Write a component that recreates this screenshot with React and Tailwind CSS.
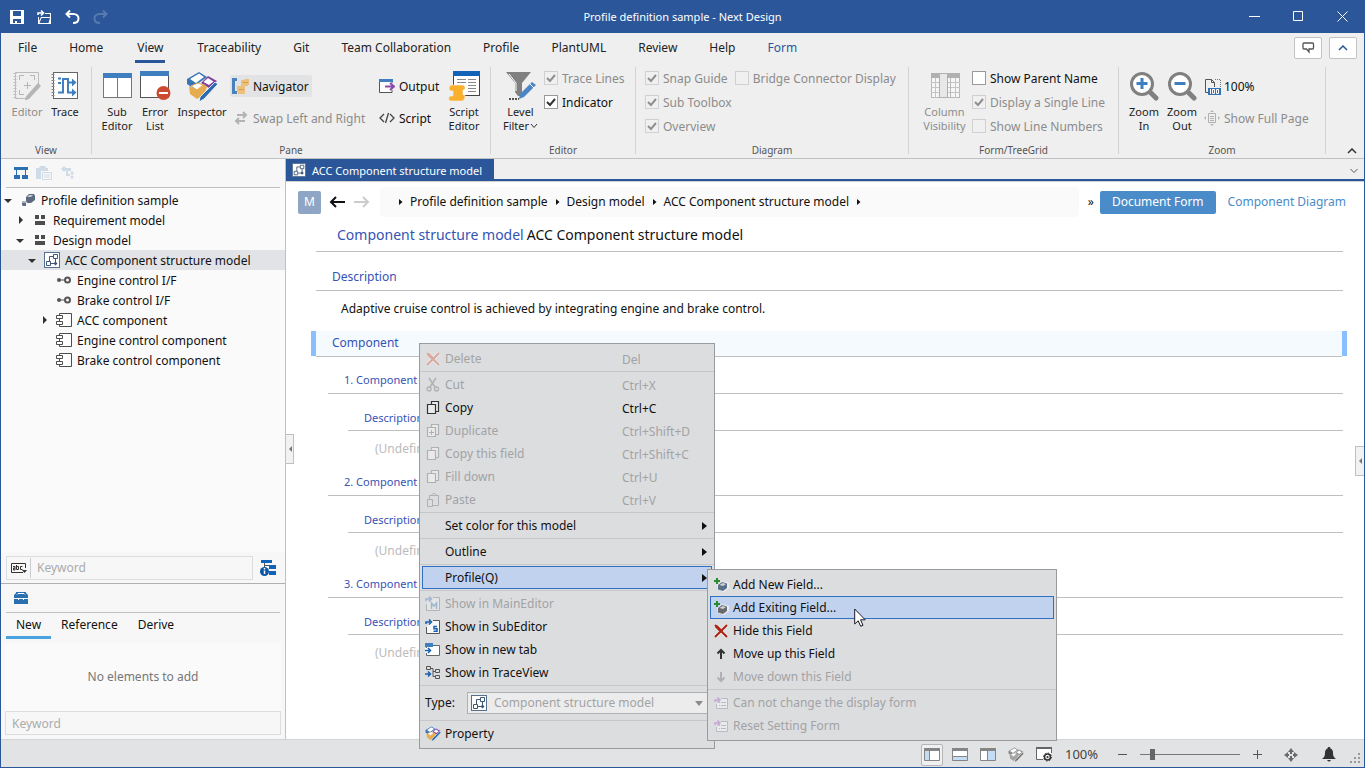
import React from 'react';
import clsx from 'clsx';

/* ---------- icons ---------- */

function Svg({ w = 16, h = 16, children, className }) {
    return (
        <svg width={w} height={h} viewBox={`0 0 ${w} ${h}`} fill="none" className={clsx("shrink-0", className)} aria-hidden="true">
            {children}
        </svg>
    );
}

const SaveIcon = () => (
    <Svg w={14} h={14}>
        <path fill="#fff" fillRule="evenodd" d="M0 0h14v14H0zM3 1v5h8V1zM3 9v4h2v-2h2v2h4V9z" />
    </Svg>
);

const OpenIcon = () => (
    <Svg w={15} h={14}>
        <path stroke="#fff" strokeWidth="1.600" d="M1 5V3h5M4 .500 6.500 3 4 5.500" />
        <path fill="#fff" fillRule="evenodd" d="M8 3h6v11H1V7h1v4l2-4h9V4H8z" />
        <path fill="#2b579a" d="M4.500 8H13l-1.500 5H2.500z" />
    </Svg>
);

const UndoIcon = ({ flip }) => (
    <Svg w={15} h={14} className={flip ? "-scale-x-100 opacity-20" : ""}>
        <path stroke="#fff" strokeWidth="2" d="M5 .500 1.500 4 5 7.500M2 4h6.500C11.500 4 13.500 6 13.500 8.500S11.500 13 8 13" />
    </Svg>
);

const EditorIcon = () => (
    <Svg w={30} h={30}>
        <path stroke="#bcbcbc" d="M3.500 1.500h23v14M3.500 1.500v26h12" />
        <path stroke="#bcbcbc" strokeDasharray="1 2" strokeWidth="3" d="M3 2v26" />
        <path stroke="#b5b5b5" d="M7.500 9V4.500H12M18 4.500h4.500V9M7.500 19v4.500H12M15.500 11v7M12 14.500h7" />
        <path fill="#b5b5b5" d="m26 12 3 3-12 13-4 1.500 1-4z" />
    </Svg>
);

const TraceIcon = () => (
    <Svg w={28} h={30}>
        <rect x="2.500" y="1.500" width="24" height="26" fill="#fff" stroke="#666" />
        <path stroke="#888" strokeDasharray="1 2" strokeWidth="3" d="M2 3v24" />
        <path stroke="#3f7fbf" strokeWidth="2" d="M7 7.500h3M7 12h3M7 21.500h5V8h5v13.500h4M17 11.500h5" />
        <path fill="#3f7fbf" d="m21 7.500 4.500 4-4.500 4zM21 17.500l4.500 4-4.500 4z" />
    </Svg>
);

const SubEditorIcon = () => (
    <Svg w={30} h={30}>
        <rect x="1.500" y="3.500" width="28" height="23" fill="#fff" stroke="#777" />
        <path fill="#3f7fbf" d="M1 2h29v5H1z" />
        <path stroke="#777" d="M15.500 7v20" />
    </Svg>
);

const ErrorListIcon = () => (
    <Svg w={32} h={30}>
        <rect x="1.500" y="1.500" width="28" height="25" fill="#fff" stroke="#555" />
        <path fill="#3f7fbf" d="M1 0h29v5H1z" />
        <circle cx="24.500" cy="22" r="7" fill="#cc4a31" />
        <path fill="#fff" d="M20 21h9v2h-9z" />
    </Svg>
);

function InspectorIcon({ size = 32, gray }) {
    const c = gray ? ["#8a8a8a", "#8a8a8a", "#a5a5a5", "#777"] : ["#3a75b5", "#7d3fa0", "#e8ac50", "#2b6cb0"];
    return (
        <svg width={size} height={size} viewBox="0 0 32 32" fill="none" className="shrink-0" aria-hidden="true">
            <path d="M1 8 13 1l8 5-11 8zM1 8l9 6v5l-9-6z" fill={c[0]} />
            <path d="m4 8 9-5.500L18 6l-8 6z" fill="#fff" />
            <path d="m22 5 9 5-8 7-8-5z" fill={c[1]} />
            <path d="m22 7 5.500 3.500L23 14l-5.500-3z" fill="#fff" />
            <path d="m3 15 8 4v9l-7-5zM11 19l7-6 3 3-3 8-7 4z" fill={c[2]} />
            <path d="m5 15 7-3 5 2-6 5z" fill="#fff" stroke={c[2]} />
            <path d="m29 11 3 2-14 15-5 3 1-5z" fill={c[3]} stroke="#fff" strokeWidth=".8" />
        </svg>
    );
}

const NavigatorIcon = () => (
    <Svg w={18} h={16}>
        <path fill="#4a82bd" d="M0 0h5v3H3v10h2v3H0z" />
        <path fill="#ecc07a" d="M9 2h3l1-1h4v6h-1v1h-3v8H6v-2H5V8h4z" />
        <path stroke="#d99d4a" d="M7 11.500h5M11 4.500h5" />
    </Svg>
);

const SwapIcon = () => (
    <Svg w={14} h={14}>
        <path stroke="#b3b3b3" strokeWidth="2" d="M3 4h9M9 1l3 3-3 3M11 10H2M5 7l-3 3 3 3" />
    </Svg>
);

const OutputIcon = () => (
    <Svg w={16} h={14}>
        <path fill="#fff" stroke="#555" d="M13 4V1.500H.500v12H13V11" />
        <path fill="#3f7fbf" d="M0 0h14v3H0z" />
        <path stroke="#8a4aab" strokeWidth="2" d="M6 7.500h8M11 4l4 3.500-4 3.500" />
    </Svg>
);

const ScriptIcon = () => (
    <Svg w={16} h={12}>
        <path stroke="#444" strokeWidth="1.300" d="M5 2 1 6l4 4M11 2l4 4-4 4M9.500 1l-3 10" />
    </Svg>
);

const ScriptEditorIcon = () => (
    <Svg w={32} h={30}>
        <rect x="5.500" y="1.500" width="26" height="23" fill="#fff" stroke="#444" />
        <path fill="#1262b8" d="M5 0h27v5H5z" />
        <path stroke="#888" d="M9 8.500h9M20 8.500h8M9 11.500h9M20 11.500h8M20 14.500h8M20 17.500h8M20 20.500h8" />
        <path fill="#fbb02d" stroke="#f0efef" strokeWidth=".6" d="M4 14h10c4 0 4 5 1 5v5h2c0 4-1 6-4 6H3c-3 0-3-5 0-5h2v-5H3c-3-1-2-6 1-6z" />
    </Svg>
);

const FilterIcon = () => (
    <Svg w={32} h={30}>
        <path fill="#808080" d="M1 1h25l-9 11v13h-4l-3-4v-9z" />
        <path stroke="#fff" d="m4 3 7 9v8" />
        <path stroke="#555" strokeWidth="2" strokeDasharray="2 1" d="M4 28h10" />
        <path fill="#4a86c5" d="m27 11 4 3-12 12-5 2 1-5z" />
        <path stroke="#fff" d="m25 13 4 4" />
    </Svg>
);

const ColumnsIcon = () => (
    <Svg w={32} h={28}>
        <rect x="2.500" y="2.500" width="28" height="24" fill="#f6f6f6" stroke="#b8b8b8" />
        <path fill="#b0b0b0" d="M2 2h29v5H2z" />
        <path stroke="#c4c4c4" d="M2 11.500h29M2 16.500h29M2 21.500h29M6.500 7v20M26.500 7v20" />
        <path fill="#e8e8e8" stroke="#b0b0b0" d="M10.500 2.500h8v24h-8z" />
        <path stroke="#b8b8b8" d="M21.500 7v20" />
    </Svg>
);

const ZoomIcon = ({ plus }) => (
    <Svg w={30} h={30}>
        <circle cx="13" cy="13" r="10.500" fill="#fff" stroke="#808080" strokeWidth="3" />
        <path stroke="#808080" strokeWidth="5" strokeLinecap="round" d="m22 22 5 5" />
        <path stroke="#3f7fbf" strokeWidth="3" d={plus ? "M7.500 12.500h11M13 7v11" : "M7.500 12.500h11"} />
    </Svg>
);

const Page100Icon = () => (
    <Svg w={17} h={17}>
        <path stroke="#555" d="M4 14.500H1.500V1.500h6l3 3V9M7.500 1.500v3h3" />
        <path stroke="#777" strokeDasharray="1 1" d="M11 1.500h5.500V9" />
        <path fill="#3273b8" d="M4 10h13v7H4z" />
        <path stroke="#fff" d="M6.500 11v5M8.500 11.500h2v4h-2zM12.500 11.500h2v4h-2z" />
    </Svg>
);

const FullPageIcon = () => (
    <Svg w={16} h={16}>
        <path stroke="#b0b0b0" d="M4.500 3.500h7v9h-7zM6 6.500h4M6 8.500h4M6 10.500h4" />
        <path fill="#b8b8b8" d="m8 0 2 2H6zM8 16l2-2H6zM0 8l2-2v4zM16 8l-2-2v4z" />
    </Svg>
);

const StructIcon = ({ size = 16 }) => (
    <svg width={size} height={size} viewBox="0 0 16 16" fill="none" className="shrink-0" aria-hidden="true">
        <rect x=".5" y=".5" width="15" height="15" fill="#fff" stroke="#56708f" />
        <path stroke="#3f5876" d="M9.500 2.500h4v4h-4zM2.500 9.500h4v4h-4zM9 4.500H5.500V9M7 11.500h3M11.500 7v3" />
        <path fill="#3f5876" d="m11.500 9.500 2 2-2 2-2-2z" />
    </svg>
);

const ProjectIcon = () => (
    <Svg>
        <path fill="#5c6b80" d="m6 5 3-3h5l1 2v4l-4 3H7L6 9z" />
        <path fill="#5c6b80" d="M2 9h4v5H3l-1-1z" />
        <path fill="#c5cdd8" d="m7 5 2.500-2H13l-2 2z" />
        <path fill="#fff" d="M2 9.500h4v1H2z" />
    </Svg>
);

const PackageIcon = () => (
    <Svg>
        <path fill="#4d4d4d" d="M3 3h4v4H3zM9 3h4v4H9zM3 9h10v4H3z" />
    </Svg>
);

const InterfaceIcon = () => (
    <Svg>
        <circle cx="3" cy="8" r="2" fill="#555" />
        <path stroke="#555" d="M4 8h6" />
        <circle cx="11.500" cy="8" r="2.500" stroke="#555" strokeWidth="2" />
    </Svg>
);

const ComponentIcon = () => (
    <Svg>
        <path stroke="#4d4d4d" d="M3.500 1.500h12v13h-12z" fill="#fff" />
        <path stroke="#4d4d4d" d="M.500 3.500h6v3h-6zM.500 9.500h6v3h-6z" fill="#fff" />
    </Svg>
);

const CopyIcon = ({ plus, color = "#9d9ea0" }) => (
    <Svg w={14} h={16}>
        <path stroke={color} strokeWidth="1.200" fill="#f4f4f4" fillOpacity=".6" d="M5.500 4V1.500h7v10H10M1.500 4.500h8v9h-8z" />
        {plus && <path stroke={color} d="M3 9.500h5M5.500 7v5" />}
    </Svg>
);

const PasteIcon = () => (
    <Svg w={14} h={16}>
        <path stroke="#b0b1b3" d="M3.500 7V3.500h9v10H7M6 3.500v-1l1-1h2l1 1v1M1.500 7.500h5v7h-5z" />
    </Svg>
);

const CutIcon = () => (
    <Svg w={14} h={16}>
        <path stroke="#b0b1b3" strokeWidth="1.500" d="m3 1 6 9M10 1l-6 9" />
        <circle cx="3" cy="12" r="2" stroke="#b0b1b3" strokeWidth="1.300" />
        <circle cx="10.500" cy="12" r="2" stroke="#b0b1b3" strokeWidth="1.300" />
    </Svg>
);

const CrossIcon = ({ color }) => (
    <Svg w={14} h={14}>
        <path stroke="#f2f2f2" strokeWidth="4" d="m1 1 12 12M13 1 1 13" opacity=".6" />
        <path stroke={color} strokeWidth="2" d="m1 1 12 12M13 1 1 13" />
        <path stroke={color} strokeWidth="3" d="m2 2 6 6" />
    </Svg>
);

const ShowInIcon = ({ letter, faded }) => (
    <Svg className={faded ? "opacity-30" : ""}>
        <path fill="#f8f8f8" stroke="#555" d="M8 1.500h6.500v13H1.500V8" />
        <path stroke="#1560b0" strokeWidth="1.500" d="M1 5V3h4M4 .500 6.500 3 4 5.500" />
        <path
            stroke="#1560b0"
            strokeWidth="1.500"
            d={letter === "M" ? "M6.500 13V7l2.500 3 2.500-3v6" : "M12 7.500H9v2.200h3v2.500H8.500"}
        />
    </Svg>
);

const NewTabIcon = () => (
    <Svg>
        <path fill="#fff" stroke="#666" d="M1.500 3.500h13v10h-13z" />
        <path fill="#3f7fbf" d="M0 1h8v4H0z" />
        <path fill="#fff" d="M0 6h7v5H0z" />
        <path stroke="#1560b0" strokeWidth="1.500" d="M0 8.500h5M3 6l2.500 2.500L3 11" />
    </Svg>
);

const TraceViewIcon = () => (
    <Svg>
        <path stroke="#555" d="M1.500 1.500h4v3h-4zM10.500 4.500h4v3h-4zM10.500 10.500h4v3h-4zM6 3.500h2v8h2M8 6.500h2" />
        <path stroke="#1560b0" strokeWidth="1.500" d="M0 9h5M3 6.500 5.500 9 3 11.500" />
    </Svg>
);

const AddFieldIcon = ({ color }) => (
    <Svg>
        <path fill="#f4f4f4" d="m4 8 5-4 7 2v5l-5 4-6-2z" opacity=".8" />
        <path fill={color} d="m5 8 4-3 5 1.500V11l-4 3-5-1.500z" />
        <path fill="#cdd3da" d="m6.500 8 3-2 3.500 1-3 2z" />
        <path stroke="#2c8a2c" strokeWidth="2" d="M1 4h6M4 1v6" />
    </Svg>
);

const ArrowIcon = ({ down, color }) => (
    <Svg className={down ? "rotate-180" : ""}>
        <path stroke={color} strokeWidth="2" d="M8 13V4M4.500 7.500 8 4l3.500 3.500" />
    </Svg>
);

const FormResetIcon = () => (
    <Svg w={15} h={14}>
        <path fill="#e9eaec" stroke="#b9bac6" d="M7 2.500h6.500v10h-11V8" />
        <path stroke="#b9bac6" d="M5 6.500h1M7 6.500h5M5 9.500h1M7 9.500h5" />
        <path stroke="#c3a9d3" strokeWidth="1.500" d="M1 6V4h4M3.500 1.500 6 4 3.500 6.500" />
    </Svg>
);

const TreeViewIcon = () => (
    <Svg w={14} h={14}>
        <path fill="#2a6fb0" d="M0 1h14v3H0zM0 9h6v4H0zM8 9h6v4H8z" />
        <path stroke="#2a6fb0" d="M2.500 4v5M11.500 4v5" />
    </Svg>
);

const PaneFrame = ({ children }) => (
    <Svg w={16} h={14}>
        <path fill="#fff" d="M1 1h14v12H1z" />
        {children}
        <path stroke="#858585" d="M.500.500h15v12H.500z" />
        <path fill="#858585" d="M0 0h16v3H0z" />
    </Svg>
);

const Cursor = () => (
    <Svg w={13} h={20} className="absolute top-[608px] left-[853px] z-30">
        <path fill="#fff" stroke="#1a1a2a" d="M.700 1v15l3.500-3.200 2.500 5.500 2.300-1-2.500-5.500h4.700z" />
    </Svg>
);

/* ---------- ribbon ---------- */

const tabs = ["File", "Home", "View", "Traceability", "Git", "Team Collaboration", "Profile", "PlantUML", "Review", "Help", "Form"];

function BigButton({ icon, lines, className, disabled, drop }) {
    return (
        <button
            disabled={disabled}
            className={clsx("flex flex-col items-center pt-2 text-[11px] leading-[14px]", disabled ? "text-[#8c8c8c]" : "text-[#222]", className)}
        >
            <span className="mb-1 flex h-[30px] items-start justify-center">{icon}</span>
            {lines.map((line, i) => (
                <span key={line} className="flex items-center whitespace-nowrap">
                    {line}
                    {drop && i === lines.length - 1 && (
                        <Svg w={8} h={6} className="ml-px">
                            <path stroke="#333" d="m1 1 3 3.500L7 1" />
                        </Svg>
                    )}
                </span>
            ))}
        </button>
    );
}

function SmallButton({ icon, label, disabled, active }) {
    return (
        <button
            disabled={disabled}
            className={clsx(
                "flex h-[22px] items-center gap-1 self-start rounded-xs px-[3px] whitespace-nowrap",
                active && "bg-[#e1e3e5]",
                disabled ? "text-[#8c8c8c]" : "text-[#111]"
            )}
        >
            <span className="flex w-4 justify-center">{icon}</span>
            <span className="pt-0.5">{label}</span>
        </button>
    );
}

function Check({ label, checked, disabled }) {
    return (
        <label className={clsx("flex h-6 items-center gap-1 whitespace-nowrap", disabled ? "text-[#8c8c8c]" : "text-[#111]")}>
            <span className="grid">
                <input
                    type="checkbox"
                    defaultChecked={checked}
                    disabled={disabled}
                    className={clsx(
                        "col-start-1 row-start-1 size-3.5 appearance-none border",
                        disabled ? "border-[#cfd0d2] bg-[#f0f0f0]" : "border-[#9a9a9a] bg-white"
                    )}
                />
                {checked && (
                    <Svg w={14} h={14} className="pointer-events-none col-start-1 row-start-1">
                        <path stroke={disabled ? "#8f8f8f" : "#333"} strokeWidth="2" d="m3 7 3 3 5-6" />
                    </Svg>
                )}
            </span>
            <span className="pt-0.5">{label}</span>
        </label>
    );
}

function Group({ title, width, children }) {
    return (
        <section aria-label={title} className={clsx("flex shrink-0 flex-col", width)}>
            <div className="flex h-20 items-start">{children}</div>
            <div className="text-center text-[10px] leading-[14px] text-[#555]">{title}</div>
        </section>
    );
}

const Divider = () => <div className="mt-1 h-[87px] w-px shrink-0 bg-[#d2d3d5]" />;

function Ribbon() {
    return (
        <div className="shrink-0 border-b border-[#bfc0c2] bg-[#efefef]">
            <nav className="flex h-[30px] pl-px">
                {tabs.map((tab) => (
                    <button
                        key={tab}
                        className={clsx("flex flex-col items-center px-4 pt-1.5 leading-[18px] whitespace-nowrap", tab === "Form" ? "text-[#2b579a]" : "text-[#222]")}
                    >
                        <span>{tab}</span>
                        {tab === "View" && <span className="mt-[3px] h-[3px] w-[30px] bg-[#2b579a]" />}
                    </button>
                ))}
                <div className="ml-auto flex items-start gap-[7px] pt-1 pr-[7px]">
                    <button aria-label="Feedback" className="flex h-[22px] w-7 items-center justify-center rounded-xs border border-[#c3c3c3] bg-white">
                        <Svg w={14} h={14}>
                            <path stroke="#555" strokeWidth="1.300" d="M3 2h8.500q1 0 1 1v4q0 1-1 1H8v3L5.500 8H3Q2 8 2 7V3q0-1 1-1z" />
                        </Svg>
                    </button>
                    <button aria-label="Collapse" className="flex h-[22px] w-7 items-center justify-center rounded-xs border border-[#c3c3c3] bg-white">
                        <Svg w={10} h={6}>
                            <path stroke="#2b579a" strokeWidth="1.500" d="m1 5 4-4 4 4" />
                        </Svg>
                    </button>
                </div>
            </nav>
            <div className="flex h-[95px]">
                <Group title="View" width="w-[90px]">
                    <BigButton icon={<EditorIcon />} lines={["Editor"]} disabled className="ml-[7px] w-[38px]" />
                    <BigButton icon={<TraceIcon />} lines={["Trace"]} className="w-[38px]" />
                </Group>
                <Divider />
                <Group title="Pane" width="w-[398px]">
                    <BigButton icon={<SubEditorIcon />} lines={["Sub", "Editor"]} className="ml-1.5 w-[38px]" />
                    <BigButton icon={<ErrorListIcon />} lines={["Error", "List"]} className="w-[38px]" />
                    <BigButton icon={<InspectorIcon />} lines={["Inspector"]} className="w-14" />
                    <div className="flex w-[146px] flex-col gap-2.5 pt-3">
                        <SmallButton icon={<NavigatorIcon />} label="Navigator" active />
                        <SmallButton icon={<SwapIcon />} label="Swap Left and Right" disabled />
                    </div>
                    <div className="flex w-[69px] flex-col gap-2.5 pt-3">
                        <SmallButton icon={<OutputIcon />} label="Output" />
                        <SmallButton icon={<ScriptIcon />} label="Script" />
                    </div>
                    <BigButton icon={<ScriptEditorIcon />} lines={["Script", "Editor"]} className="w-[38px]" />
                </Group>
                <Divider />
                <Group title="Editor" width="w-36">
                    <BigButton icon={<FilterIcon />} lines={["Level", "Filter"]} drop className="ml-1.5 w-[47px]" />
                    <div className="pt-[3px]">
                        <Check label="Trace Lines" checked disabled />
                        <Check label="Indicator" checked />
                    </div>
                </Group>
                <Divider />
                <Group title="Diagram" width="w-[272px]">
                    <div className="pt-[3px] pl-[9px]">
                        <div className="flex gap-[7px]">
                            <Check label="Snap Guide" checked disabled />
                            <Check label="Bridge Connector Display" disabled />
                        </div>
                        <Check label="Sub Toolbox" checked disabled />
                        <Check label="Overview" checked disabled />
                    </div>
                </Group>
                <Divider />
                <Group title="Form/TreeGrid" width="w-[209px]">
                    <BigButton icon={<ColumnsIcon />} lines={["Column", "Visibility"]} disabled className="ml-2 w-[55px]" />
                    <div className="pt-[3px]">
                        <Check label="Show Parent Name" />
                        <Check label="Display a Single Line" checked disabled />
                        <Check label="Show Line Numbers" disabled />
                    </div>
                </Group>
                <Divider />
                <Group title="Zoom" width="w-[206px]">
                    <BigButton icon={<ZoomIcon plus />} lines={["Zoom", "In"]} className="ml-1.5 w-[38px]" />
                    <BigButton icon={<ZoomIcon />} lines={["Zoom", "Out"]} className="w-[38px]" />
                    <div className="flex flex-col gap-2.5 pt-3">
                        <SmallButton icon={<Page100Icon />} label="100%" />
                        <SmallButton icon={<FullPageIcon />} label="Show Full Page" disabled />
                    </div>
                </Group>
                <Divider />
                <button aria-label="Hide ribbon" className="mr-[7px] mb-1 ml-auto self-end">
                    <Svg w={10} h={6}>
                        <path stroke="#333" strokeWidth="1.500" d="m1 5 4-4 4 4" />
                    </Svg>
                </button>
            </div>
        </div>
    );
}

/* ---------- sidebar ---------- */

const tree = [
    { label: "Profile definition sample", icon: <ProjectIcon />, indent: "pl-[2px]", open: true },
    { label: "Requirement model", icon: <PackageIcon />, indent: "pl-3.5", closed: true },
    { label: "Design model", icon: <PackageIcon />, indent: "pl-3.5", open: true },
    { label: "ACC Component structure model", icon: <StructIcon />, indent: "pl-[26px]", open: true, selected: true },
    { label: "Engine control I/F", icon: <InterfaceIcon />, indent: "pl-[38px]" },
    { label: "Brake control I/F", icon: <InterfaceIcon />, indent: "pl-[38px]" },
    { label: "ACC component", icon: <ComponentIcon />, indent: "pl-[38px]", closed: true },
    { label: "Engine control component", icon: <ComponentIcon />, indent: "pl-[38px]" },
    { label: "Brake control component", icon: <ComponentIcon />, indent: "pl-[38px]" },
];

function TreeRow({ node }) {
    return (
        <li className={clsx("flex h-5 items-center whitespace-nowrap", node.indent, node.selected && "bg-[#e1e3e7]")}>
            <Svg w={10} h={10} className="mr-[7px]">
                {node.open && <path fill="#333" d="M1 4h8L5 8z" />}
                {node.closed && <path fill="#333" d="m4 1 4 4-4 4z" />}
            </Svg>
            <span className="mr-[5px]">{node.icon}</span>
            <span className="pt-0.5">{node.label}</span>
        </li>
    );
}

function Sidebar() {
    return (
        <aside className="flex w-[285px] shrink-0 flex-col border-r border-[#bfc0c2] bg-[#f7f7f7]">
            <div className="mx-[5px] flex h-[29px] shrink-0 items-center gap-2 border-b border-[#c0c0c0] pl-2">
                <TreeViewIcon />
                <Svg>
                    <path fill="#cfdce8" d="M0 3h3l1-2h5l1 2h2v3H5v8H0z" />
                    <path stroke="#cfdce8" fill="#f7f7f7" d="M6.500 7.500h9v7h-9zM8 10h6M8 12h6" />
                </Svg>
                <Svg>
                    <path fill="#cfdce8" d="m4 1 3 3-3 3-3-3zM6 3h5v3H6z" />
                    <path fill="#cfdce8" d="M6 6h2v3h2v2H6zM12 6l2 2-2 2-2-2zM12 10l2 2-2 2-2-2z" />
                </Svg>
            </div>
            <ul className="min-h-0 flex-1 bg-[#fafafa] pt-0.5">
                {tree.map((node) => <TreeRow key={node.label} node={node} />)}
            </ul>
            <div className="flex h-8 shrink-0 items-center border-b border-[#b0b0b0] pl-[5px]">
                <div className="flex h-6 flex-1 items-center border border-[#dcdddf]">
                    <Svg w={17} h={12} className="ml-1">
                        <path stroke="#333" d="M14.500 6V1.500H.500v9H12" />
                        <path stroke="#333" d="M2 4.500h2v3.500H2.500V6H4M5.500 3v4.500h2v-3h-2M11.500 4.500h-2v3h2" />
                        <path fill="#333" d="M11 8h5l-2.500 3z" />
                    </Svg>
                    <input aria-label="Model keyword" placeholder="Keyword" className="ml-[2px] h-5 w-full min-w-0 border-l border-[#c8cdd2] px-1.5 placeholder:text-[#aaabad]" />
                </div>
                <Svg className="mr-[9px] ml-[7px]">
                    <path fill="#1262b8" d="M1 0h11v3H1zM9 5h7v4H9zM9 11h7v4H9z" />
                    <circle cx="4.500" cy="11.500" r="4.500" fill="#0d56a6" />
                    <path stroke="#fff" strokeWidth="1.500" d="M4.500 8v1.500M4.500 10.500V14" />
                    <path stroke="#555" d="M4.500 3v4M4 5.500h5" />
                </Svg>
            </div>
            <div className="mx-[5px] flex h-[29px] shrink-0 items-center border-b border-[#c0c0c0] pl-2">
                <Svg w={14} h={14}>
                    <path fill="#2a6fb0" d="M2 2V1h10v1l2 2v3H0V4zM0 8h14v5H0z" />
                    <path stroke="#fff" d="M3 3.500 4 2.500h6l1 1M4.500 7v2M9.500 7v2" />
                </Svg>
            </div>
            <div className="mx-[5px] flex h-[26px] shrink-0">
                <button className="border-b-[3px] border-[#4aa3df] px-2.5">New</button>
                <button className="border-b-[3px] border-transparent px-2.5">Reference</button>
                <button className="border-b-[3px] border-transparent px-2.5">Derive</button>
            </div>
            <div className="mx-1 mt-1 flex h-[68px] shrink-0 items-center justify-center bg-[#fafafa] text-[#777]">No elements to add</div>
            <input aria-label="Element keyword" placeholder="Keyword" className="mx-1 mb-1 h-6 shrink-0 border border-[#dcdddf] px-1.5 placeholder:text-[#aaabad]" />
        </aside>
    );
}

/* ---------- document ---------- */

const crumbs = ["Profile definition sample", "Design model", "ACC Component structure model"];

const CrumbArrow = () => (
    <Svg w={5} h={6}>
        <path fill="#111" d="M1 0 4.500 3 1 6z" />
    </Svg>
);

function ComponentEntry({ n }) {
    return (
        <div className="h-[102px]">
            <h3 className="ml-3 h-[26px] border-b border-[#bfbfbf] pl-4 text-[11px] leading-6 text-[#3553b5]">{n}. Component</h3>
            <h4 className="mt-3 ml-8 h-[25px] border-b border-[#bfbfbf] pl-4 text-[11px] leading-6 text-[#3553b5]">Description</h4>
            <p className="mt-2 ml-[59px] leading-5 text-[#bbb]">(Undefined)</p>
        </div>
    );
}

function Document() {
    return (
        <main className="relative flex min-w-0 flex-1 flex-col bg-white">
            <div className="flex h-[22px] shrink-0 items-start border-b-2 border-[#2b579a] bg-[#efefef]">
                <button className="flex h-[22px] items-center gap-1.5 bg-[#2b579a] pr-3 pl-1.5 text-[11px] whitespace-nowrap text-white">
                    <StructIcon size={14} />
                    <span className="pt-0.5">ACC Component structure model</span>
                </button>
                <button aria-label="Tab list" className="mt-[9px] mr-1.5 ml-auto">
                    <Svg w={8} h={6}>
                        <path stroke="#555" d="m.500 1 3.500 3.500L7.500 1" />
                    </Svg>
                </button>
            </div>
            <div className="flex h-[41px] shrink-0 items-center border-t border-[#d0d0d0] pr-[18px] pl-3">
                <button className="size-[23px] rounded-xs bg-[#8ea5c6] text-white">M</button>
                <button aria-label="Back" className="ml-2">
                    <Svg w={16} h={14}>
                        <path stroke="#111" strokeWidth="2" d="M16 7H2M7 2 2 7l5 5" />
                    </Svg>
                </button>
                <button aria-label="Forward" className="ml-[9px]" disabled>
                    <Svg w={16} h={14}>
                        <path stroke="#ccc" strokeWidth="2" d="M0 7h14M9 2l5 5-5 5" />
                    </Svg>
                </button>
                <div className="ml-2.5 flex h-[30px] min-w-0 flex-1 items-center gap-[7px] rounded-sm bg-[#fafafa] pl-[18px] whitespace-nowrap">
                    <CrumbArrow />
                    {crumbs.map((crumb) => (
                        <React.Fragment key={crumb}>
                            <a href="#">{crumb}</a>
                            <CrumbArrow />
                        </React.Fragment>
                    ))}
                </div>
                <span className="mr-1.5 ml-[9px]">»</span>
                <button className="h-[23px] rounded-xs bg-[#4a8bc9] px-3 whitespace-nowrap text-white">Document Form</button>
                <button className="ml-3 whitespace-nowrap text-[#4a8bc9]">Component Diagram</button>
            </div>
            <div className="pr-[21px] pl-[30px]">
                <h1 className="flex h-[30px] gap-[3px] border-b border-[#bfbfbf] pl-[21px] text-sm leading-[26px] whitespace-nowrap">
                    <span className="text-[#3553b5]">Component structure model</span>
                    <span>ACC Component structure model</span>
                </h1>
                <h2 className="mt-3 h-[27px] border-b border-[#bfbfbf] pl-4 leading-[26px] text-[#3553b5]">Description</h2>
                <p className="mt-2 ml-[25px] leading-5">Adaptive cruise control is achieved by integrating engine and brake control.</p>
                <div className="-mr-1 -ml-[5px] mt-3 flex h-[26px]">
                    <div className="h-[25px] w-[5px] bg-[#8abfff]" />
                    <h2 className="h-[26px] flex-1 border-b border-[#bfbfbf] bg-[#f4fafe] pl-4 leading-6 text-[#3553b5]">Component</h2>
                    <div className="h-[25px] w-[5px] bg-[#8abfff]" />
                </div>
                <div className="pt-[11px]">
                    <ComponentEntry n={1} />
                    <ComponentEntry n={2} />
                    <ComponentEntry n={3} />
                </div>
            </div>
            <button aria-label="Collapse left pane" className="absolute top-[275px] left-0 flex h-[30px] w-2 items-center justify-center border border-l-0 border-[#c0c0c0] bg-[#f2f2f2]">
                <Svg w={4} h={6}><path fill="#777" d="M4 0v6L1 3z" /></Svg>
            </button>
            <button aria-label="Open right pane" className="absolute top-[287px] right-0 flex h-[30px] w-[9px] items-center justify-center border border-r-0 border-[#c0c0c0] bg-[#f2f2f2]">
                <Svg w={4} h={6}><path fill="#777" d="M4 0v6L1 3z" /></Svg>
            </button>
        </main>
    );
}

/* ---------- menus ---------- */

const editItems = [
    { label: "Cut", keys: "Ctrl+X", icon: <CutIcon />, disabled: true },
    { label: "Copy", keys: "Ctrl+C", icon: <CopyIcon color="#333" /> },
    { label: "Duplicate", keys: "Ctrl+Shift+D", icon: <CopyIcon plus color="#b0b1b3" />, disabled: true },
    { label: "Copy this field", keys: "Ctrl+Shift+C", icon: <CopyIcon color="#b0b1b3" />, disabled: true },
    { label: "Fill down", keys: "Ctrl+U", icon: <CopyIcon color="#b0b1b3" />, disabled: true },
    { label: "Paste", keys: "Ctrl+V", icon: <PasteIcon />, disabled: true },
];

const showItems = [
    { label: "Show in MainEditor", icon: <ShowInIcon letter="M" faded />, disabled: true },
    { label: "Show in SubEditor", icon: <ShowInIcon letter="S" /> },
    { label: "Show in new tab", icon: <NewTabIcon /> },
    { label: "Show in TraceView", icon: <TraceViewIcon /> },
];

const fieldItems = [
    { label: "Add New Field...", icon: <AddFieldIcon color="#5b6f88" /> },
    { label: "Add Exiting Field...", icon: <AddFieldIcon color="#6a6a6a" />, active: true },
    { label: "Hide this Field", icon: <CrossIcon color="#ad2412" /> },
    { label: "Move up this Field", icon: <ArrowIcon color="#333" /> },
    { label: "Move down this Field", icon: <ArrowIcon down color="#b0b1b3" />, disabled: true },
];

function MenuItem({ label, keys, icon, disabled, active, sub }) {
    return (
        <button
            disabled={disabled}
            role="menuitem"
            className={clsx(
                "flex h-[23px] w-full items-center border pr-1 pl-[2px] text-left whitespace-nowrap",
                active ? "border-[#2f6fc4] bg-[#c1d2ee]" : "border-transparent",
                disabled ? "text-[#a2a3a5]" : "text-[#111]"
            )}
        >
            <span className="mr-1 flex w-4 shrink-0 justify-center">{icon}</span>
            <span className="flex-1">{label}</span>
            {keys && <span className="w-[85px] pt-0.5">{keys}</span>}
            {sub && <Svg w={5} h={8}><path fill="#111" d="m0 0 5 4-5 4z" /></Svg>}
        </button>
    );
}

const Separator = () => <div role="separator" className="-mx-[2px] my-px h-px bg-[#c6c7c9]" />;

function ContextMenu() {
    return (
        <div role="menu" className="absolute top-[343px] left-[418px] z-10 w-[296px] border border-[#9a9b9d] bg-[#dcdddf] px-[2px] py-[3px]">
            <MenuItem label="Delete" keys="Del" icon={<CrossIcon color="#d9a9a0" />} disabled />
            <Separator />
            {editItems.map((item) => <MenuItem key={item.label} {...item} />)}
            <Separator />
            <MenuItem label="Set color for this model" sub />
            <Separator />
            <MenuItem label="Outline" sub />
            <Separator />
            <MenuItem label="Profile(Q)" active sub />
            <Separator />
            {showItems.map((item) => <MenuItem key={item.label} {...item} />)}
            <Separator />
            <div className="flex h-8 items-center pl-[3px]">
                <label htmlFor="model-type" className="w-[42px]">Type:</label>
                <div className="relative flex h-[22px] flex-1 items-center border border-[#b0b1b3] bg-[#ececec]">
                    <span className="absolute left-[3px]"><StructIcon /></span>
                    <select id="model-type" disabled className="h-full w-full appearance-none pl-[26px] text-[#a2a3a5]">
                        <option>Component structure model</option>
                    </select>
                    <Svg w={8} h={5} className="pointer-events-none absolute right-2"><path fill="#8a8a8a" d="M0 0h8L4 5z" /></Svg>
                </div>
            </div>
            <Separator />
            <MenuItem label="Property" icon={<InspectorIcon size={16} />} />
        </div>
    );
}

function FieldMenu() {
    return (
        <div role="menu" className="absolute top-[569px] left-[706px] z-20 w-[350px] border border-[#9a9b9d] bg-[#dcdddf] px-[2px] py-[3px]">
            {fieldItems.map((item) => <MenuItem key={item.label} {...item} />)}
            <Separator />
            <MenuItem label="Can not change the display form" icon={<FormResetIcon />} disabled />
            <MenuItem label="Reset Setting Form" icon={<FormResetIcon />} disabled />
        </div>
    );
}

/* ---------- status bar ---------- */

function StatusBar() {
    return (
        <footer className="flex h-7 shrink-0 items-center justify-end border-t border-[#d3d4d6] bg-[#e2e3e5] pt-0.5 pr-1 text-[#444]">
            <button aria-label="Left pane" className="flex h-[22px] w-[22px] items-center justify-center rounded-xs border border-[#b5b6b8] bg-[#f0f0f0]">
                <PaneFrame><path fill="#c5dcf5" d="M1 3h4v10H1z" /><path stroke="#858585" d="M5.500 3v10" /></PaneFrame>
            </button>
            <button aria-label="Bottom pane" className="ml-[9px]">
                <PaneFrame><path fill="#c5dcf5" d="M1 9h14v4H1z" /><path stroke="#858585" d="M1 8.500h14" /></PaneFrame>
            </button>
            <button aria-label="Right pane" className="ml-3">
                <PaneFrame><path fill="#c5dcf5" d="M8 3h7v10H8z" /><path stroke="#858585" d="M7.500 3v10" /></PaneFrame>
            </button>
            <button aria-label="Inspector" className="ml-3"><InspectorIcon size={16} gray /></button>
            <button aria-label="View settings" className="ml-3">
                <Svg w={17} h={15}>
                    <path fill="#fff" stroke="#666" d="M7 12.500H.500V.500h15V6" />
                    <path fill="#666" d="M0 0h16v2H0z" />
                    <circle cx="11.500" cy="10" r="3" stroke="#333" strokeWidth="1.500" />
                    <circle cx="11.500" cy="10" r="4" stroke="#333" strokeDasharray="1.500 1.600" />
                    <circle cx="11.500" cy="10" r="1" fill="#333" />
                </Svg>
            </button>
            <span className="ml-3 w-9 text-[13px]">100%</span>
            <button aria-label="Zoom out" className="ml-4">
                <Svg w={11} h={11}><path stroke="#555" d="M1 5.500h9" /></Svg>
            </button>
            <input
                type="range"
                aria-label="Zoom"
                defaultValue={10}
                className="mx-3 h-3 w-[100px] appearance-none bg-transparent [&::-webkit-slider-runnable-track]:h-px [&::-webkit-slider-runnable-track]:bg-[#777] [&::-webkit-slider-thumb]:-mt-[5px] [&::-webkit-slider-thumb]:h-[11px] [&::-webkit-slider-thumb]:w-[5px] [&::-webkit-slider-thumb]:appearance-none [&::-webkit-slider-thumb]:bg-[#666]"
            />
            <button aria-label="Zoom in">
                <Svg w={11} h={11}><path stroke="#555" d="M1 5.500h9M5.500 1v9" /></Svg>
            </button>
            <button aria-label="Fit" className="ml-5">
                <Svg>
                    <path fill="#6a6a6a" d="m8 1 3 4H5zM8 15l3-4H5zM1 8l4-3v6zM15 8l-4-3v6z" />
                    <path fill="#6a6a6a" d="M7 5h2v2H7zM7 9h2v2H7zM5 7h1v2H5zM10 7h1v2h-1z" />
                </Svg>
            </button>
            <button aria-label="Notifications" className="ml-[23px]">
                <Svg w={14} h={15}>
                    <path fill="#333" d="M7 0c1 0 1.500.6 1.500 1.400C10.500 2 11 4 11 6c0 3 .800 4 3 6H0c2.200-2 3-3 3-6 0-2 .500-4 2.500-4.600C5.500.600 6 0 7 0zM5 13h4q-2 3-4 0z" />
                </Svg>
            </button>
            <Svg w={10} h={10} className="mt-1.5 ml-3.5">
                <path fill="#999" d="M8 0h2v2H8zM4 4h2v2H4zM8 4h2v2H8zM0 8h2v2H0zM4 8h2v2H4zM8 8h2v2H8z" />
            </Svg>
        </footer>
    );
}

export default function App() {
    return (
        <div className="relative flex h-screen w-full flex-col overflow-hidden border border-t-0 border-[#2b579a] bg-[#efefef] font-['Noto_Sans','Open_Sans',sans-serif] text-xs text-[#111]">
            <header className="grid h-[33px] shrink-0 grid-cols-[1fr_auto_1fr] items-center bg-[#2b579a] text-white">
                <div className="flex items-center gap-[13px] pl-[9px]">
                    <button aria-label="Save"><SaveIcon /></button>
                    <button aria-label="Open"><OpenIcon /></button>
                    <button aria-label="Undo"><UndoIcon /></button>
                    <button aria-label="Redo" disabled><UndoIcon flip /></button>
                </div>
                <div className="pt-0.5 text-[11px]">Profile definition sample - Next Design</div>
                <div className="flex items-center justify-end gap-[33px] pr-4">
                    <button aria-label="Minimize"><Svg w={11} h={11}><path stroke="#fff" d="M0 5.500h11" /></Svg></button>
                    <button aria-label="Maximize"><Svg w={11} h={11}><path stroke="#fff" d="M.500.500h9v9h-9z" /></Svg></button>
                    <button aria-label="Close"><Svg w={11} h={11}><path stroke="#fff" d="m.500.500 10 10M10.500.500l-10 10" /></Svg></button>
                </div>
            </header>
            <Ribbon />
            <div className="flex min-h-0 flex-1">
                <Sidebar />
                <Document />
            </div>
            <StatusBar />
            <ContextMenu />
            <FieldMenu />
            <Cursor />
        </div>
    );
}
